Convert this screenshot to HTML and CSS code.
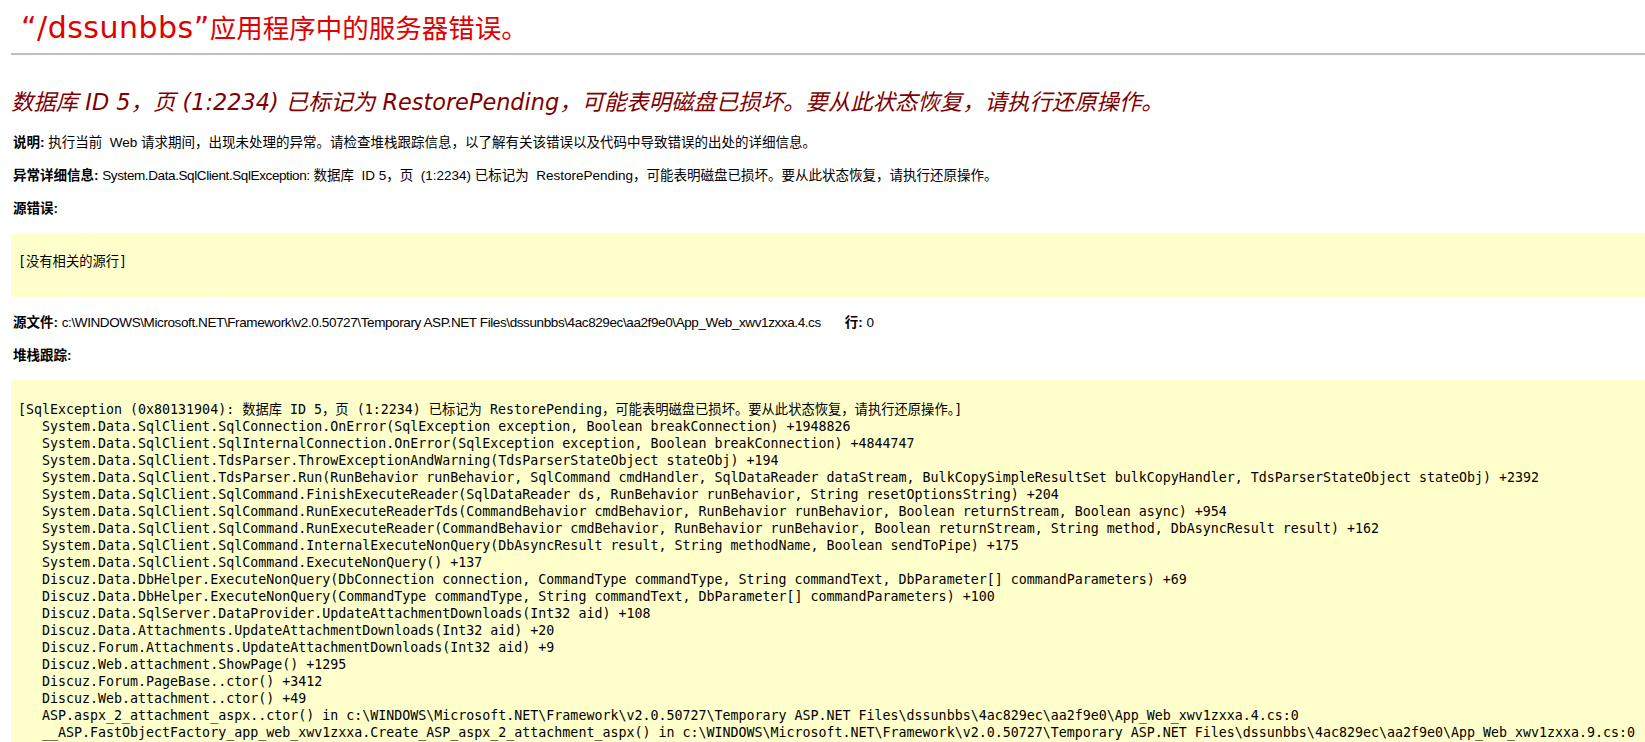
FILE: index.html
```html
<!DOCTYPE html>
<html lang="zh-CN">
<head>
    <meta charset="UTF-8">
    <title>数据库 ID 5，页 (1:2234) 已标记为 RestorePending，可能表明磁盘已损坏。要从此状态恢复，请执行还原操作。</title>
    <link rel="stylesheet" href="styles.css">
</head>
<body>

    <h1 class="err-title"><span class="app-name">“/dssunbbs”</span>应用程序中的服务器错误。</h1>
    <hr class="title-rule">

    <h2 class="err-msg">数据库 ID 5，页 (1:2234) 已标记为 RestorePending，可能表明磁盘已损坏。要从此状态恢复，请执行还原操作。</h2>

    <div class="details">
        <p><b>说明:</b> 执行当前&nbsp; Web 请求期间，出现未处理的异常。请检查堆栈跟踪信息，以了解有关该错误以及代码中导致错误的出处的详细信息。</p>
        <p><b>异常详细信息:</b> <span class="en">System.Data.SqlClient.SqlException:</span> 数据库&nbsp; ID 5，页&nbsp; (1:2234) 已标记为&nbsp; RestorePending，可能表明磁盘已损坏。要从此状态恢复，请执行还原操作。</p>
        <p><b>源错误:</b></p>

        <div class="code-box source-box">
            <code>[没有相关的源行]</code>
        </div>

        <p><b>源文件:</b> <span class="en">c:\WINDOWS\Microsoft.NET\Framework\v2.0.50727\Temporary ASP.NET Files\dssunbbs\4ac829ec\aa2f9e0\App_Web_xwv1zxxa.4.cs</span><b class="line-no">行:</b> 0</p>
        <p><b>堆栈跟踪:</b></p>

        <div class="code-box trace-box">
<pre>[SqlException (0x80131904): 数据库 ID 5，页 (1:2234) 已标记为 RestorePending，可能表明磁盘已损坏。要从此状态恢复，请执行还原操作。]
   System.Data.SqlClient.SqlConnection.OnError(SqlException exception, Boolean breakConnection) +1948826
   System.Data.SqlClient.SqlInternalConnection.OnError(SqlException exception, Boolean breakConnection) +4844747
   System.Data.SqlClient.TdsParser.ThrowExceptionAndWarning(TdsParserStateObject stateObj) +194
   System.Data.SqlClient.TdsParser.Run(RunBehavior runBehavior, SqlCommand cmdHandler, SqlDataReader dataStream, BulkCopySimpleResultSet bulkCopyHandler, TdsParserStateObject stateObj) +2392
   System.Data.SqlClient.SqlCommand.FinishExecuteReader(SqlDataReader ds, RunBehavior runBehavior, String resetOptionsString) +204
   System.Data.SqlClient.SqlCommand.RunExecuteReaderTds(CommandBehavior cmdBehavior, RunBehavior runBehavior, Boolean returnStream, Boolean async) +954
   System.Data.SqlClient.SqlCommand.RunExecuteReader(CommandBehavior cmdBehavior, RunBehavior runBehavior, Boolean returnStream, String method, DbAsyncResult result) +162
   System.Data.SqlClient.SqlCommand.InternalExecuteNonQuery(DbAsyncResult result, String methodName, Boolean sendToPipe) +175
   System.Data.SqlClient.SqlCommand.ExecuteNonQuery() +137
   Discuz.Data.DbHelper.ExecuteNonQuery(DbConnection connection, CommandType commandType, String commandText, DbParameter[] commandParameters) +69
   Discuz.Data.DbHelper.ExecuteNonQuery(CommandType commandType, String commandText, DbParameter[] commandParameters) +100
   Discuz.Data.SqlServer.DataProvider.UpdateAttachmentDownloads(Int32 aid) +108
   Discuz.Data.Attachments.UpdateAttachmentDownloads(Int32 aid) +20
   Discuz.Forum.Attachments.UpdateAttachmentDownloads(Int32 aid) +9
   Discuz.Web.attachment.ShowPage() +1295
   Discuz.Forum.PageBase..ctor() +3412
   Discuz.Web.attachment..ctor() +49
   ASP.aspx_2_attachment_aspx..ctor() in c:\WINDOWS\Microsoft.NET\Framework\v2.0.50727\Temporary ASP.NET Files\dssunbbs\4ac829ec\aa2f9e0\App_Web_xwv1zxxa.4.cs:0
   __ASP.FastObjectFactory_app_web_xwv1zxxa.Create_ASP_aspx_2_attachment_aspx() in c:\WINDOWS\Microsoft.NET\Framework\v2.0.50727\Temporary ASP.NET Files\dssunbbs\4ac829ec\aa2f9e0\App_Web_xwv1zxxa.9.cs:0
</pre>
        </div>
    </div>

</body>
</html>
```

FILE: styles.css
```css
body {
    margin: 0 0 0 11px;
    background-color: white;
    font-family: "Liberation Sans", "Noto Sans CJK SC", sans-serif;
    color: black;
    overflow: hidden;
}
.err-title {
    margin: 0;
    padding: 12px 0 0 10px;
    height: 32px;
    font-family: "DejaVu Sans", "Noto Sans CJK SC", sans-serif;
    font-size: 26.5px;
    font-weight: normal;
    line-height: 32px;
    color: #e00000;
}
.app-name {
    font-size: 30px;
    letter-spacing: 0.5px;
}
.title-rule {
    margin: 9px 0 0 0;
    height: 2px;
    border: none;
    background-color: #c0c0c0;
}
.err-msg {
    margin: 34px 0 0 0;
    font-family: "DejaVu Sans", "Noto Sans CJK SC", sans-serif;
    font-size: 22.4px;
    font-weight: normal;
    font-style: italic;
    line-height: 26px;
    color: #800000;
}
.details {
    margin-top: 19px;
    font-size: 13.5px;
    line-height: 17px;
}
.details p {
    margin: 0 0 16px 2px;
}
.details b {
    font-weight: bold;
}
.en {
    letter-spacing: -0.4px;
}
.line-no {
    margin-left: 24px;
}
.code-box {
    background-color: #ffffcc;
    font-family: "DejaVu Sans Mono", "Noto Sans CJK SC", monospace;
    font-size: 13.3px;
    line-height: 17px;
    margin-bottom: 17px;
}
.code-box code {
    font-family: inherit;
}
.source-box {
    padding: 20px 7px 27px;
}
.trace-box {
    padding: 21px 7px 10px;
}
.trace-box pre {
    margin: 0;
    font-family: inherit;
    font-size: inherit;
    line-height: 17px;
}
```
